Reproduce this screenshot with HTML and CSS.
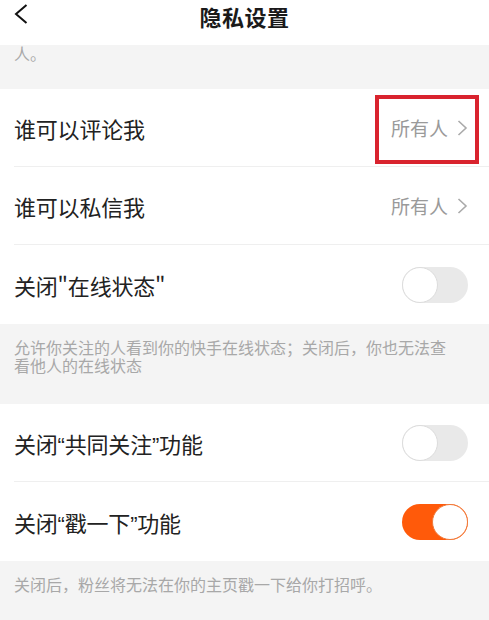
FILE: index.html
```html
<!DOCTYPE html>
<html lang="zh-CN">
<head>
<meta charset="utf-8">
<title>隐私设置</title>
<link rel="stylesheet" href="styles.css">
</head>
<body>
<div class="page">
  <header class="topbar">
    <svg class="back" width="14" height="20" viewBox="0 0 14 20"><path d="M12.5 1 L2 10 L12.5 19" fill="none" stroke="#111" stroke-width="2"/></svg>
    <h1 class="title">隐私设置</h1>
  </header>

  <div class="note note-top">人。</div>

  <div class="list">
    <div class="row row-annotated">
      <span class="label">谁可以评论我</span>
      <span class="value">所有人<svg class="chev" width="11" height="16" viewBox="0 0 11 16"><path d="M1.5 1 L9 8 L1.5 15" fill="none" stroke="#aaa" stroke-width="1.6"/></svg></span>
      <span class="mark"></span>
    </div>
    <div class="row">
      <span class="label">谁可以私信我</span>
      <span class="value">所有人<svg class="chev" width="11" height="16" viewBox="0 0 11 16"><path d="M1.5 1 L9 8 L1.5 15" fill="none" stroke="#aaa" stroke-width="1.6"/></svg></span>
    </div>
    <div class="row">
      <span class="label">关闭"在线状态"</span>
      <span class="switch"><span class="knob"></span></span>
    </div>
  </div>

  <div class="note note-mid">允许你关注的人看到你的快手在线状态；关闭后，你也无法查看他人的在线状态</div>

  <div class="list">
    <div class="row">
      <span class="label">关闭<span class="q">“</span>共同关注<span class="q">”</span>功能</span>
      <span class="switch"><span class="knob"></span></span>
    </div>
    <div class="row">
      <span class="label">关闭<span class="q">“</span>戳一下<span class="q">”</span>功能</span>
      <span class="switch on"><span class="knob"></span></span>
    </div>
  </div>

  <div class="note note-bottom">关闭后，粉丝将无法在你的主页戳一下给你打招呼。</div>
</div>
</body>
</html>
```

FILE: styles.css
```css
* { box-sizing: border-box; }
html, body {
  margin: 0;
  padding: 0;
  background: #f4f4f4;
  font-family: "Noto Sans CJK SC", "Noto Sans", "Liberation Sans", sans-serif;
}
.page {
  width: 489px;
  height: 620px;
  overflow: hidden;
  background: #f4f4f4;
}
.topbar {
  height: 45px;
  background: #fff;
  display: flex;
  align-items: flex-start;
  justify-content: center;
  position: relative;
}
.back {
  position: absolute;
  left: 14px;
  top: 4px;
}
.title {
  margin: 0;
  font-size: 22px;
  font-weight: 700;
  color: #1a1a1a;
  line-height: 32px;
  letter-spacing: 0.5px;
}
.note {
  font-size: 16px;
  line-height: 18px;
  color: #a8a8a8;
  padding-left: 14px;
}
.note-top {
  height: 44px;
  line-height: 16px;
}
.note-mid {
  height: 80px;
  padding-top: 14px;
  padding-right: 30px;
}
.note-bottom {
  height: 58px;
  padding-top: 14px;
}
.list {
  background: #fff;
  padding-left: 14px;
}
.row {
  display: flex;
  align-items: center;
  justify-content: space-between;
  height: 78px;
  padding-right: 21px;
  border-bottom: 1px solid #efefef;
  position: relative;
}
.row:last-child { border-bottom: none; height: 79px; }
.label {
  font-size: 22px;
  color: #222;
  letter-spacing: -0.2px;
}
.q {
  font-family: "Liberation Sans", sans-serif;
}
.value {
  display: flex;
  align-items: center;
  font-size: 19px;
  color: #9a9a9a;
}
.chev {
  margin-left: 9px;
}
.mark {
  position: absolute;
  right: 10px;
  top: 6px;
  width: 104px;
  height: 69px;
  border: 4px solid #d9232e;
}
.switch {
  width: 66px;
  height: 36px;
  border-radius: 18px;
  background: #e9e9e9;
  display: flex;
  align-items: center;
  justify-content: flex-start;
}
.knob {
  width: 36px;
  height: 36px;
  border-radius: 50%;
  background: #fff;
  border: 1.5px solid #dcdcdc;
}
.switch.on {
  background: #ff5a0a;
  justify-content: flex-end;
}
.switch.on .knob {
  border: 1.5px solid #f07a3a;
}
```
